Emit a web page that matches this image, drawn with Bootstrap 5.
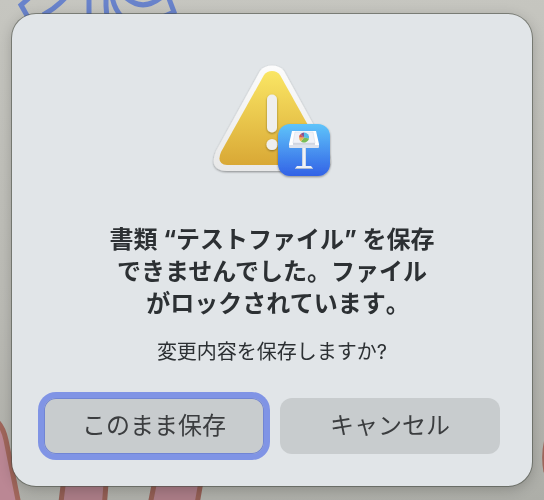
<!DOCTYPE html>
<html lang="ja">
<head>
<meta charset="utf-8">
<meta name="viewport" content="width=device-width, initial-scale=1">
<title>保存の確認</title>
<link href="https://cdn.jsdelivr.net/npm/bootstrap@5.3.0/dist/css/bootstrap.min.css" rel="stylesheet">
<style>
body {
  font-family: Inter, "Noto Sans CJK JP", sans-serif;
  background: linear-gradient(178deg, #c6c6c0 0%, #bbbbb5 60%, #adaea8 100%);
  color: #2c3033;
}
.backdrop-art { z-index: -1; }
.alert-window {
  background: #e1e5e8;
  border-radius: 24px;
  box-shadow: 0 0 0 1px rgba(70, 74, 66, .55), 0 3px 14px rgba(0, 0, 0, .22);
  padding: 48px 32px 32px;
}
.stage { padding: 14px 12px; }
.alert-title { font-size: 24px; line-height: 32px; font-weight: 700; padding-top: 38px; }
.half-stop { font-feature-settings: "halt"; }
.alert-note { font-size: 20px; line-height: 28px; padding-top: 18px; }
.alert-actions { gap: 16px; padding-top: 32px; }
.choice {
  --bs-btn-font-size: 24px;
  --bs-btn-line-height: 32px;
  --bs-btn-padding-y: 12px;
  --bs-btn-border-width: 0;
  --bs-btn-border-radius: 12px;
  --bs-btn-bg: #c8ccce;
  --bs-btn-color: #3b3d3f;
  --bs-btn-hover-bg: #bdc2c5;
  --bs-btn-hover-color: #3b3d3f;
}
.choice-default { box-shadow: inset 0 0 0 1px #7185d4, 0 0 0 6px #8094e5; }
</style>
<script src="https://cdn.jsdelivr.net/npm/bootstrap@5.3.0/dist/js/bootstrap.bundle.min.js"></script>
</head>
<body class="min-vh-100">
<svg class="backdrop-art position-fixed top-0 start-0 w-100 h-100" viewBox="0 0 544 500" preserveAspectRatio="none" aria-hidden="true">
  <g fill="none" stroke="#6983cb" stroke-width="5">
    <path d="M36 -8L21 5L29 19M66 -3Q56 8 43 15M89 -4V18M106 -4V6L107 18M112 -4Q114 9 122 17M123 -5Q142 14 163 -4M168 -4L174 12L160 18"/>
  </g>
  <g fill="#bb8794" stroke="#a0665b" stroke-width="5">
    <path d="M-8 418Q2 422 6 440L20 510H-8Z"/>
    <path fill="#aa7c86" stroke="#925e54" d="M60 510L65 470H107L104 510ZM149 510L157 470H203L196 510Z"/>
    <path d="M550 430Q542 450 546 472"/>
  </g>
</svg>
<main class="stage container-fluid">
  <section class="alert-window text-center" role="alertdialog" aria-labelledby="alertTitle" aria-describedby="alertNote">
    <svg class="d-block mx-auto" width="124" height="124" viewBox="210 62 124 124" role="img" aria-label="警告">
      <defs>
        <linearGradient id="gold" x2="0" y2="1"><stop stop-color="#fae664"/><stop offset="1" stop-color="#d9a835"/></linearGradient>
        <linearGradient id="rim" x2="0" y2="1"><stop stop-color="#fcfcfc"/><stop offset="1" stop-color="#e8e8e8"/></linearGradient>
        <linearGradient id="sky" x2="0" y2="1"><stop stop-color="#5fc4fa"/><stop offset="1" stop-color="#3262e6"/></linearGradient>
        <linearGradient id="pole"><stop stop-color="#b9c6d9"/><stop offset=".5" stop-color="#fff"/><stop offset="1" stop-color="#c0cde0"/></linearGradient>
        <filter id="drop" x="-20%" y="-20%" width="140%" height="150%"><feDropShadow dx="0" dy="1" stdDeviation="1" flood-opacity=".4"/></filter>
      </defs>
      <path filter="url(#drop)" fill="url(#rim)" d="M260 71Q264 65.500 272 65.500T284 71L328 151Q336 171 317 171H227Q208 170 216 151Z"/>
      <path fill="url(#gold)" d="M264 75Q267 71 272 71T280 75L323 152Q328 165 317 165H227Q216 164 221 152Z"/>
      <g filter="url(#drop)" fill="#efefef">
        <rect x="267" y="94.500" width="10" height="38" rx="5"/>
        <circle cx="272" cy="144.500" r="5.500"/>
      </g>
      <rect filter="url(#drop)" x="278" y="124" width="52" height="52" rx="12" fill="url(#sky)"/>
      <rect x="302" y="147" width="4" height="20" fill="url(#pole)"/>
      <path d="M297 166H311L313 168.500H295Z" fill="#edf1f7"/>
      <path d="M295 168.500H313" stroke="#a9b8d4"/>
      <path d="M292 131H316L319 144V147H289V144Z" fill="#fff"/>
      <path d="M289 145H319V147Q319 148 318 148H290Q289 148 289 147Z" fill="#dce2ed"/>
      <path d="M295 132H313L315 143H293Z" fill="#f0f2f8" stroke="#dde2ed" stroke-width=".7"/>
      <path d="M293 144H315" stroke="#aab4c8"/>
      <g transform="translate(304 137.500)">
        <path d="M0 0V-5A5 5 0 0 1 5 1Z" fill="#56bde9"/>
        <path d="M0 0L5 1A5 5 0 0 1 -3 4Z" fill="#79bd57"/>
        <path d="M0 0L-3 4A5 5 0 0 1 -5 0Z" fill="#edb650"/>
        <path d="M0 0L-5 0A5 5 0 0 1 -3.500 -3.500Z" fill="#d45a4c"/>
        <path d="M0 0L-3.500 -3.500A5 5 0 0 1 0 -5Z" fill="#895293"/>
      </g>
    </svg>
    <h1 id="alertTitle" class="alert-title mb-0">書類 “テストファイル” を保存<br>できませんでした。ファイル<br>がロックされています<span class="half-stop">。</span></h1>
    <p id="alertNote" class="alert-note mb-0">変更内容を保存しますか?</p>
    <div class="alert-actions d-flex">
      <button type="button" class="btn choice choice-default flex-fill w-50">このまま保存</button>
      <button type="button" class="btn choice flex-fill w-50">キャンセル</button>
    </div>
  </section>
</main>
</body>
</html>
